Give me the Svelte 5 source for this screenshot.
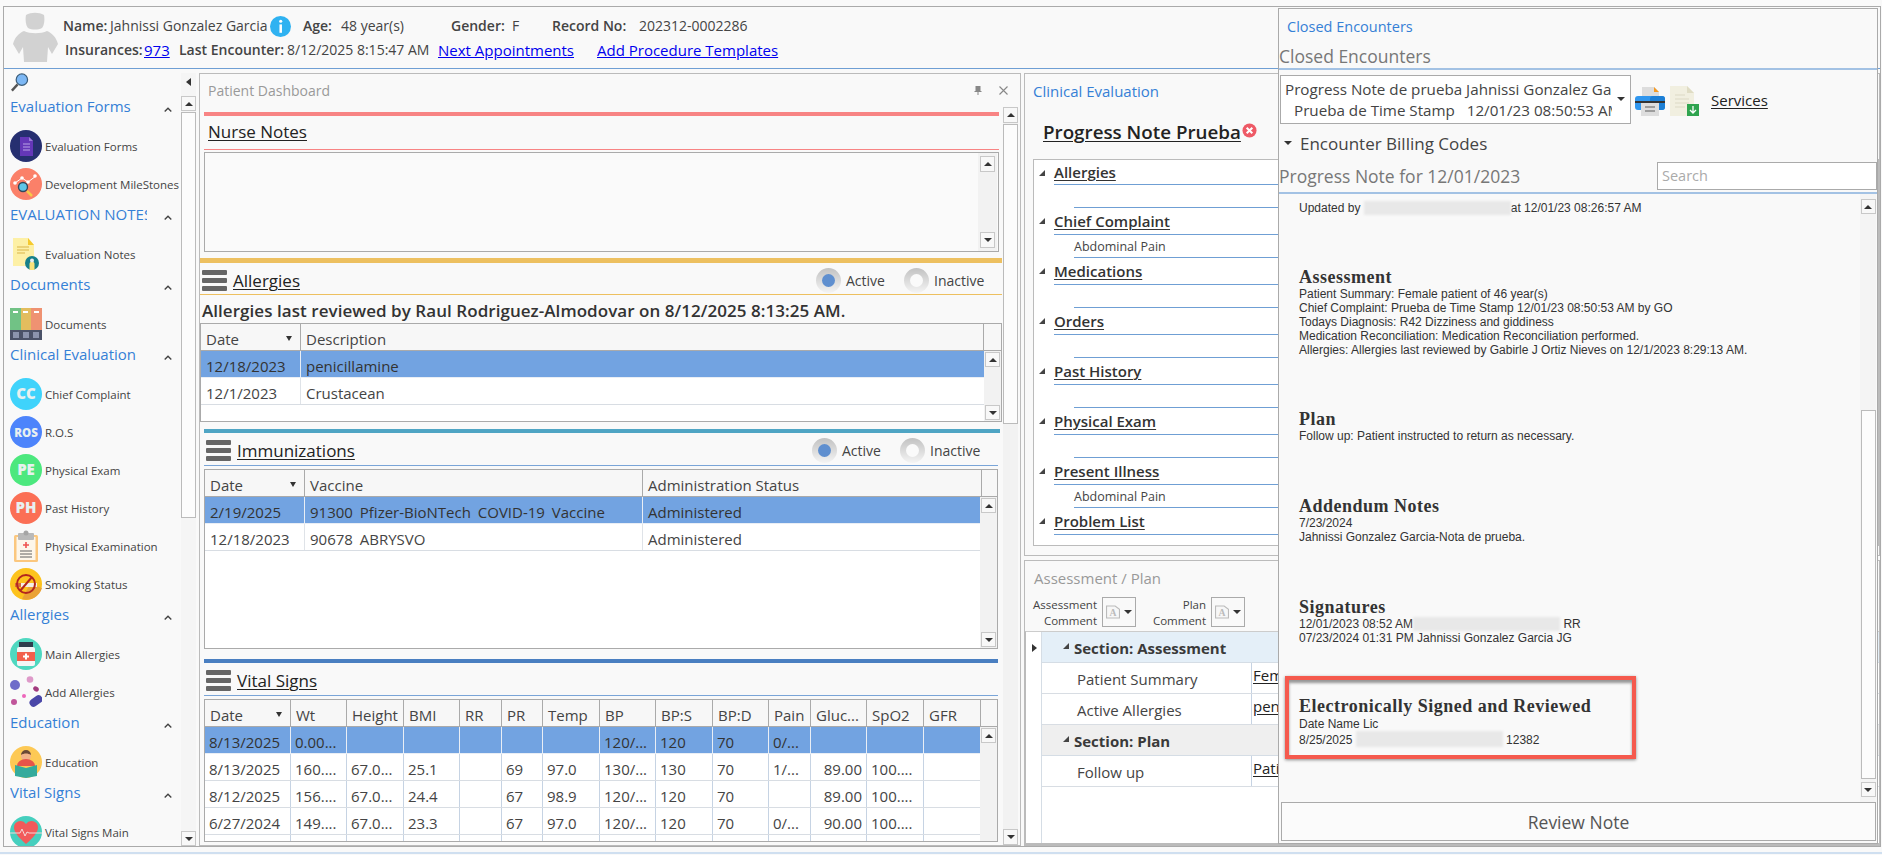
<script>
  const sidebar = [
    { title: 'Evaluation Forms', items: [['Evaluation Forms','form'],['Development MileStones','mile']] },
    { title: 'EVALUATION NOTES', items: [['Evaluation Notes','note']] },
    { title: 'Documents', items: [['Documents','docs']] },
    { title: 'Clinical Evaluation', items: [['Chief Complaint','cc'],['R.O.S','ros'],['Physical Exam','pe'],['Past History','ph'],['Physical Examination','clip'],['Smoking Status','smoke']] },
    { title: 'Allergies', items: [['Main Allergies','bottle'],['Add Allergies','pills']] },
    { title: 'Education', items: [['Education','edu']] },
    { title: 'Vital Signs', items: [['Vital Signs Main','heart']] }
  ];
  const letters = { cc: ['CC', '#3fd3fb', 15], ros: ['ROS', '#4d84fb', 11.5], pe: ['PE', '#4ce87e', 15], ph: ['PH', '#fb6f55', 15] };
  const vitalsHead = ['Date','Wt','Height','BMI','RR','PR','Temp','BP','BP:S','BP:D','Pain','Gluc...','SpO2','GFR'];
  const vitals = [
    ['8/13/2025','0.00...','','','','','','120/...','120','70','0/...','','',''],
    ['8/13/2025','160....','67.0...','25.1','','69','97.0','130/...','130','70','1/...','89.00','100....',''],
    ['8/12/2025','156....','67.0...','24.4','','67','98.9','120/...','120','70','','89.00','100....',''],
    ['6/27/2024','149....','67.0...','23.3','','67','97.0','120/...','120','70','0/...','90.00','100....',''],
    ['','','','','','','','','','','','','','']
  ];
  const tree = [
    ['Allergies',''],['Chief Complaint','Abdominal Pain'],['Medications',''],['Orders',''],
    ['Past History',''],['Physical Exam',''],['Present Illness','Abdominal Pain'],['Problem List',null]
  ];
</script>

{#snippet scrollbtn(dir)}
  <div class="sbtn"><i class={dir}></i></div>
{/snippet}

{#snippet bars()}
  <svg class="bars" viewBox="0 0 25 21"><rect width="25" height="5" rx="1"/><rect y="8" width="25" height="5" rx="1"/><rect y="16" width="25" height="5" rx="1"/></svg>
{/snippet}

{#snippet radios()}
  <div class="radios">
    <span class="radio on"><i></i></span><span class="rl">Active</span>
    <span class="radio"><i></i></span><span class="rl">Inactive</span>
  </div>
{/snippet}

{#snippet icon(k)}
  <svg class="ic" viewBox="0 0 32 32">
    {#if letters[k]}
      <circle cx="16" cy="16" r="16" fill={letters[k][1]}/>
      <text x="16" y="21" text-anchor="middle" font-family="Open Sans, sans-serif" font-weight="800" font-size={letters[k][2]} fill="#e8f0f0">{letters[k][0]}</text>
    {:else if k === 'form'}
      <circle cx="16" cy="16" r="16" fill="#262f70"/><path d="M10 7h9l4 4v15H10z" fill="#6437b8"/><path d="M19 7l4 4h-4z" fill="#9a7ad8"/><path d="M13 14h7M13 17h7M13 20h7" stroke="#b9a4e6" stroke-width="1"/>
    {:else if k === 'mile'}
      <circle cx="16" cy="16" r="16" fill="#fb8069"/><path d="M5 15l7-5 6 4 8-6" stroke="#fff" stroke-width="1" fill="none"/><circle cx="5" cy="15" r="1.800" fill="#fff"/><circle cx="12" cy="10" r="1.800" fill="#fff"/><circle cx="18" cy="14" r="1.800" fill="#fff"/><circle cx="25" cy="8" r="1.800" fill="#fff"/><path d="M17 23l5 5" stroke="#f7c948" stroke-width="2.500"/><circle cx="13" cy="19" r="4.500" fill="#5fc6e8" stroke="#33475b" stroke-width="1.400"/>
    {:else if k === 'note'}
      <path d="M3 0h15l6 7v21H3z" fill="#fdf0a6"/><path d="M18 0l6 7h-6z" fill="#f5c92e"/><path d="M7 9h12M7 12h12M7 15h8" stroke="#d9b54b" stroke-width="1"/><circle cx="22" cy="25" r="7" fill="#16808a"/><path d="M19.500 32v-6a2.500 2.500 0 015 0v6z" fill="#f8e27a"/><circle cx="22" cy="22.500" r="2" fill="#e8eef0"/>
    {:else if k === 'docs'}
      <rect x="0" width="11" height="32" fill="#71c285"/><rect x="11" width="10" height="32" fill="#e3bd5e"/><rect x="21" width="11" height="32" fill="#ef9272"/><rect x="3" y="3" width="5" height="2" fill="#fff"/><rect x="13" y="3" width="5" height="2" fill="#fff"/><rect x="24" y="3" width="5" height="2" fill="#fff"/><rect y="22" width="32" height="10" fill="#4b5268"/><rect x="3" y="24" width="6" height="6" fill="#8c94ad"/><rect x="13" y="24" width="6" height="6" fill="#8c94ad"/><rect x="23" y="24" width="6" height="6" fill="#8c94ad"/>
    {:else if k === 'clip'}
      <rect x="4" y="5" width="24" height="27" rx="1.500" fill="#fbc77e"/><rect x="6.500" y="7" width="19" height="23" fill="#fdf6ea"/><rect x="8" y="3" width="16" height="7" rx="1" fill="#b9b9b9"/><circle cx="16" cy="3" r="2.500" fill="#a5a5a5"/><path d="M16 12v6M13 15h6" stroke="#ef5350" stroke-width="1.600"/><path d="M10 21h12M10 24h12M10 27h12" stroke="#606060" stroke-width="1"/>
    {:else if k === 'smoke'}
      <circle cx="16" cy="16" r="16" fill="#fdc31d"/><path d="M20 16l12 4a16 16 0 01-20 11z" fill="#eaa235"/><rect x="5" y="15" width="22" height="4" fill="#f3efe6"/><rect x="5" y="15" width="6" height="4" fill="#d96b3b"/><circle cx="16" cy="16" r="9" fill="none" stroke="#b3261e" stroke-width="2"/><path d="M10 23L22 9" stroke="#b3261e" stroke-width="2"/>
    {:else if k === 'bottle'}
      <circle cx="16" cy="16" r="16" fill="#4fd8c0"/><rect x="9" y="4" width="14" height="5" fill="#2f3e4d"/><rect x="7" y="9" width="18" height="19" rx="2" fill="#f4f6f6"/><rect x="7" y="14" width="18" height="9" fill="#f25f4c"/><path d="M16 15.500v6M13 18.500h6" stroke="#fff" stroke-width="2"/>
    {:else if k === 'pills'}
      <circle cx="5" cy="9" r="5" fill="#6f6cc9"/><circle cx="20" cy="3.500" r="3.300" fill="#de9ac9"/><ellipse cx="26" cy="13" rx="3" ry="2.300" fill="#a23a7e" transform="rotate(35 26 13)"/><circle cx="14" cy="20" r="2" fill="#ee66bb"/><circle cx="4" cy="26" r="3" fill="#c0559a"/><rect x="19" y="21" width="14" height="8" rx="4" fill="#4a47a8" transform="rotate(-35 26 25)"/>
    {:else if k === 'edu'}
      <circle cx="16" cy="16" r="16" fill="#fdc955"/><circle cx="16" cy="10" r="5" fill="#f2b48a"/><path d="M11 9a5 5 0 0110 0c-3-2-7-2-10 0z" fill="#6b4a36"/><path d="M7 20a9 7 0 0118 0z" fill="#e8544a"/><path d="M5 19l11 3 11-3v11l-11 2-11-2z" fill="#35ab9c"/>
    {:else if k === 'heart'}
      <circle cx="16" cy="16" r="16" fill="#46cfbe"/><path d="M16 28C8 21 4 16 4 11.500A6.500 6.500 0 0116 8a6.500 6.500 0 0112 3.500C28 16 24 21 16 28z" fill="#f25a5a"/><path d="M0 17h10l2-4 3 7 2-4 2 1h13" stroke="#f4d9d9" stroke-width="1" fill="none"/>
    {/if}
  </svg>
{/snippet}

<div class="root">
  <div class="frame">
    <header class="head">
      <svg class="avatar" viewBox="0 0 45 50">
        <path d="M13 3c5-3 13-3 18 0 1 5 0 11-2 13-4 2-10 2-14 0-2-2-3-8-2-13z" fill="#d2d2d2"/>
        <path d="M11 19c6 3 17 3 23 0 5 2 9 6 11 13l-6 10-4-7-1 15H11l-1-15-4 7-6-10c2-7 6-11 11-13z" fill="#d2d2d2"/>
      </svg>
      <div class="hinfo">
        <div class="r1">
          <b>Name:</b><span>Jahnissi Gonzalez Garcia</span>
          <svg class="info" viewBox="0 0 20 20"><circle cx="10" cy="10" r="10" fill="#2fb2f1"/><rect x="9" y="8" width="2.400" height="8" fill="#fff"/><circle cx="10.200" cy="5" r="1.500" fill="#fff"/></svg>
          <b>Age:</b><span>48 year(s)</span>
          <b>Gender:</b><span>F</span>
          <b>Record No:</b><span>202312-0002286</span>
        </div>
        <div class="r2">
          <b>Insurances:</b><a href="#a">973</a>
          <b>Last Encounter:</b><span>8/12/2025 8:15:47 AM</span>
          <a href="#a">Next Appointments</a><a href="#a">Add Procedure Templates</a>
        </div>
      </div>
    </header>

    <div class="body">
      <aside class="side">
        <div class="nav">
          <svg class="mag" viewBox="0 0 20 20"><path d="M8 12L2 18.500" stroke="#555" stroke-width="2.500"/><circle cx="12.500" cy="7" r="6" fill="#7db8f5" stroke="#3b5d7a" stroke-width="1.300"/></svg>
          {#each sidebar as s}
            <div class="sh"><span class="st">{s.title}</span><svg class="chev" viewBox="0 0 8 5"><path d="M.7 4.500L4 1.200l3.300 3.300" fill="none" stroke="#444" stroke-width="1.400"/></svg></div>
            {#each s.items as it}
              <div class="si">{@render icon(it[1])}<span>{it[0]}</span></div>
            {/each}
          {/each}
        </div>
        <div class="sidebar-sb">
          <i class="collapse"></i>
          {@render scrollbtn('up')}
          <div class="thumb side-thumb"></div>
          <div class="rest"></div>
          {@render scrollbtn('down')}
        </div>
      </aside>

      <section class="dash">
        <div class="dash-title">
          <span>Patient Dashboard</span>
          <div class="dash-tools">
            <svg class="pin" viewBox="0 0 8 9"><path d="M1.500 0h5v5h1v1H4.500v3h-1V6H.5V5h1z" fill="#888"/></svg>
            <svg class="close" viewBox="0 0 9 9"><path d="M.5.500l8 8M8.500.500l-8 8" stroke="#888" stroke-width="1.100"/></svg>
          </div>
        </div>
        <div class="dash-body">
          <div class="dash-main">
            <div class="bar red"></div>
            <div class="nn-title"><u>Nurse Notes</u></div>
            <div class="nn-box">
              <div class="sb nn-sb">{@render scrollbtn('up')}<div class="rest"></div>{@render scrollbtn('down')}</div>
            </div>

            <div class="bar yellow"></div>
            <div class="sec-head al-head">{@render bars()}<u>Allergies</u>{@render radios()}</div>
            <div class="reviewed">Allergies last reviewed by Raul Rodriguez-Almodovar on 8/12/2025 8:13:25 AM.</div>
            <div class="tbl al-tbl">
              <div class="thead al-cols"><div class="sort">Date<i></i></div><div>Description</div><div></div></div>
              <div class="tbody">
                <div class="rows">
                  <div class="tr al-cols sel"><div>12/18/2023</div><div>penicillamine</div></div>
                  <div class="tr al-cols"><div>12/1/2023</div><div>Crustacean</div></div>
                </div>
                <div class="sb">{@render scrollbtn('up')}<div class="rest"></div>{@render scrollbtn('down')}</div>
              </div>
            </div>

            <div class="bar teal"></div>
            <div class="sec-head im-head">{@render bars()}<u>Immunizations</u>{@render radios()}</div>
            <div class="tbl im-tbl">
              <div class="thead im-cols"><div class="sort">Date<i></i></div><div>Vaccine</div><div>Administration Status</div><div></div></div>
              <div class="tbody">
                <div class="rows">
                  <div class="tr im-cols sel"><div>2/19/2025</div><div class="vac">91300 Pfizer-BioNTech COVID-19 Vaccine</div><div>Administered</div></div>
                  <div class="tr im-cols"><div>12/18/2023</div><div class="vac">90678 ABRYSVO</div><div>Administered</div></div>
                </div>
                <div class="sb">{@render scrollbtn('up')}<div class="rest"></div>{@render scrollbtn('down')}</div>
              </div>
            </div>

            <div class="bar blue"></div>
            <div class="sec-head vs-head">{@render bars()}<u>Vital Signs</u></div>
            <div class="tbl vs-tbl">
              <div class="thead vs-cols">
                {#each vitalsHead as h, i}<div class:sort={i === 0}>{h}{#if i === 0}<i></i>{/if}</div>{/each}<div></div>
              </div>
              <div class="tbody">
                <div class="rows">
                  {#each vitals as r, ri}
                    <div class="tr vs-cols" class:sel={ri === 0}>
                      {#each r as c, i}<div class:num={i === 11}>{c}</div>{/each}
                    </div>
                  {/each}
                </div>
                <div class="sb">{@render scrollbtn('up')}<div class="rest"></div></div>
              </div>
            </div>
          </div>
          <div class="sb dash-sb">
            {@render scrollbtn('up')}
            <div class="thumb dash-thumb"></div>
            <div class="rest"></div>
            {@render scrollbtn('down')}
          </div>
        </div>
      </section>

      <div class="mid">
        <section class="clin">
          <div class="clin-title">Clinical Evaluation</div>
          <div class="note-title"><u>Progress Note Prueba</u>
            <svg class="xicon" viewBox="0 0 16 16"><circle cx="8" cy="8" r="7.500" fill="#ee5a66"/><path d="M5 5l6 6M11 5l-6 6" stroke="#fff" stroke-width="2.200"/></svg>
          </div>
          <div class="tree">
            {#each tree as t}
              <div class="tn"><i class="tri"></i><u>{t[0]}</u></div>
              {#if t[1] !== null}<div class="ts">{t[1]}</div>{/if}
            {/each}
          </div>
        </section>
        <section class="assess">
          <div class="as-title">Assessment / Plan</div>
          <div class="as-tools">
            <div class="cl l1">Assessment<br/>Comment</div>
            <div class="cb"><svg viewBox="0 0 14 13"><path d="M1 1h8l4 3v8H1z" fill="#f7f7f7" stroke="#bbb"/><text x="7" y="10.500" text-anchor="middle" font-size="9" font-weight="700" font-family="Liberation Serif, serif" fill="#bbb">A</text></svg><i></i></div>
            <div class="cl l2">Plan<br/>Comment</div>
            <div class="cb"><svg viewBox="0 0 14 13"><path d="M1 1h8l4 3v8H1z" fill="#f7f7f7" stroke="#bbb"/><text x="7" y="10.500" text-anchor="middle" font-size="9" font-weight="700" font-family="Liberation Serif, serif" fill="#bbb">A</text></svg><i></i></div>
          </div>
          <div class="grid">
            <div class="gutter"><i></i></div>
            <div class="gmain">
              <div class="gsec a"><i class="tri"></i>Section: Assessment</div>
              <div class="grow"><span>Patient Summary</span><u>Female patient</u></div>
              <div class="grow"><span>Active Allergies</span><u>penicillamine</u></div>
              <div class="gsec p"><i class="tri"></i>Section: Plan</div>
              <div class="grow"><span>Follow up</span><u>Patient instructed</u></div>
            </div>
          </div>
        </section>
      </div>
    </div>

    <section class="closed">
      <div class="c-title">Closed Encounters</div>
      <div class="c-sub">Closed Encounters</div>
      <div class="c-combo-row">
        <div class="combo">
          <div class="combo-text"><div>Progress Note de prueba Jahnissi Gonzalez Garcia</div><div class="indent">Prueba de Time Stamp &nbsp; 12/01/23 08:50:53 AM</div></div>
          <i class="caret"></i>
        </div>
        <svg class="print" viewBox="0 0 30 30">
          <path d="M7 1h12l5 5v8H7z" fill="#ddd"/><path d="M19 1l5 5h-5z" fill="#f59a23"/>
          <rect y="10" width="30" height="14" rx="3" fill="#2f96ee"/><rect x="15" y="10" width="15" height="14" rx="3" fill="#1c7fd6"/>
          <rect y="15" width="30" height="2" fill="#333"/><rect x="6" y="17" width="18" height="13" fill="#ddd"/><path d="M10 21h10M10 25h10" stroke="#888" stroke-width="1.500"/>
        </svg>
        <svg class="dl" viewBox="0 0 29 30">
          <path d="M0 0h17l7 7v23H0z" fill="#f1efe0"/><path d="M17 0l7 7h-7z" fill="#dfdcc4"/><path d="M5 9h10M5 13h14M5 17h14M5 21h10" stroke="#dcd9c5"/>
          <rect x="17" y="18" width="12" height="12" fill="#2fa44f"/><path d="M23 20v7M20 24l3 3 3-3" stroke="#fff" stroke-width="1.300" fill="none"/>
        </svg>
        <u class="services">Services</u>
      </div>
      <div class="billing"><i class="caret"></i>Encounter Billing Codes</div>
      <div class="pn-row"><span>Progress Note for 12/01/2023</span><div class="search">Search</div></div>
      <div class="c-body">
        <div class="doc">
          <p class="updated">Updated by <span class="blur b1"></span>at 12/01/23 08:26:57 AM</p>
          <h3 class="near">Assessment</h3>
          <p>Patient Summary: Female patient of 46 year(s)<br/>Chief Complaint: Prueba de Time Stamp 12/01/23 08:50:53 AM by GO<br/>Todays Diagnosis: R42 Dizziness and giddiness<br/>Medication Reconciliation: Medication Reconciliation performed.<br/>Allergies: Allergies last reviewed by Gabirle J Ortiz Nieves on 12/1/2023 8:29:13 AM.</p>
          <h3 class="near">Plan</h3>
          <p>Follow up: Patient instructed to return as necessary.</p>
          <h3>Addendum Notes</h3>
          <p>7/23/2024<br/>Jahnissi Gonzalez Garcia-Nota de prueba.</p>
          <h3>Signatures</h3>
          <p>12/01/2023 08:52 AM<span class="blur b2"></span> RR<br/>07/23/2024 01:31 PM Jahnissi Gonzalez Garcia JG</p>
          <div class="redbox">
            <h3>Electronically Signed and Reviewed</h3>
            <p>Date Name Lic<br/>8/25/2025 <span class="blur b3"></span> 12382</p>
          </div>
        </div>
        <div class="sb doc-sb">
          {@render scrollbtn('up')}
          <div class="rest"></div>
          <div class="thumb doc-thumb"></div>
          {@render scrollbtn('down')}
        </div>
      </div>
      <div class="review">Review Note</div>
    </section>
  </div>
  <div class="footline"></div>
</div>

<style>
  :global(body) { margin: 0; background: #f9f9f9; }
  .root { width: 1882px; height: 855px; box-sizing: border-box; padding: 6px 1px 0 3px; background: #f9f9f9; overflow: hidden; font-family: "Open Sans", sans-serif; color: #444; }
  .frame { position: relative; height: 841px; box-sizing: border-box; border: 1px solid #aaa; display: flex; flex-direction: column; }
  .footline { height: 2px; margin: 5px -1px 0 -3px; background: #cfdff0; }
  u { text-underline-offset: 2px; text-decoration-thickness: 1px; }

  /* header */
  .head { height: 62px; box-sizing: border-box; border-bottom: 1px solid #6f9fd4; display: flex; flex: none; padding: 5px 0 0 9px; }
  .avatar { width: 45px; height: 50px; flex: none; }
  .hinfo { margin-left: 5px; font-size: 14px; line-height: 26px; white-space: nowrap; }
  .hinfo b { font-weight: 600; }
  .r1 { display: grid; grid-template-columns: 47px 160px 33px 38px 110px 61px 40px 87px auto; align-items: center; padding-top: 1px; }
  .r2 { display: grid; grid-template-columns: 79px 35px 108px 151px 159px auto; align-items: center; margin: -2px 0 0 2px; }
  .r2 a { color: #0000ee; font-size: 15px; }
  .r2 b { font-size: 14px; }
  .info { width: 21px; height: 21px; display: block; }

  .body { flex: 1; min-height: 0; display: flex; padding-top: 4px; }

  /* sidebar */
  .side { width: 193px; flex: none; display: flex; overflow: hidden; }
  .nav { width: 177px; flex: none; position: relative; }
  .mag { display: block; width: 19px; height: 19px; margin: 0 0 3px 6px; }
  .sh { height: 32px; display: flex; align-items: flex-start; }
  .st { width: 137px; margin-left: 6px; overflow: hidden; white-space: nowrap; font-size: 15px; line-height: 22px; color: #3580d6; }
  .chev { width: 8px; height: 5px; margin: 12px 0 0 17px; }
  .si { height: 38px; display: flex; align-items: center; padding-left: 6px; font-size: 11.500px; white-space: nowrap; }
  .si span { margin-left: 3px; }
  .ic { width: 32px; height: 32px; flex: none; }
  .sidebar-sb { width: 15px; margin-left: 0; display: flex; flex-direction: column; position: relative; background: #f5f5f5; padding-top: 23px; }
  .collapse { position: absolute; left: 5px; top: 5px; border: 4px solid transparent; border-right: 5px solid #333; border-left: 0; }
  .side-thumb { height: 404px; }

  .sb { width: 17px; flex: none; display: flex; flex-direction: column; align-items: center; background: #f2f2f2; padding: 1px 0; box-sizing: border-box; }
  .sbtn { width: 13px; height: 13px; flex: none; border: 1px solid #c8c8c8; background: #f8f8f8; display: flex; align-items: center; justify-content: center; }
  .sbtn i { display: block; border: 4px solid transparent; border-top: 0; border-bottom: 4px solid #333; }
  .sbtn i.down { border-bottom: 0; border-top: 4px solid #333; }
  .rest { flex: 1; }
  .thumb { width: 13px; flex: none; border: 1px solid #bbb; background: #fcfcfc; margin: 1px 0; }
  .sidebar-sb .thumb, .sidebar-sb .sbtn { width: 13px; }

  /* dashboard */
  .dash { width: 820px; margin-left: 2px; flex: none; border: 1px solid #bbb; display: flex; flex-direction: column; }
  .dash-title { height: 33px; flex: none; display: flex; justify-content: space-between; align-items: center; padding-left: 8px; font-size: 14px; color: #999; }
  .dash-tools { display: flex; align-items: center; gap: 17px; margin-right: 12px; }
  .pin { width: 8px; height: 9px; }
  .close { width: 9px; height: 9px; }
  .dash-body { flex: 1; min-height: 0; display: flex; }
  .dash-main { width: 803px; padding-top: 5px; flex: none; overflow: hidden; }
  .dash-sb { width: 15px; padding: 0; }
  .dash-thumb { height: 298px; }
  .dash-sb .sbtn { height: 14px; }

  .bar { height: 4px; }
  .red { margin-left: 4px; width: 795px; background: #f88484; }
  .yellow { margin-top: 6px; width: 802px; height: 5px; background: #edc060; }
  .teal { margin: 7px 0 0 4px; width: 796px; background: #4fa5c4; }
  .blue { margin: 10px 0 0 4px; width: 794px; background: #4a7fc1; }
  .nn-title { height: 34px; box-sizing: border-box; margin-left: 4px; width: 795px; padding-left: 4px; border-bottom: 1px solid #f88484; font-size: 17px; line-height: 32px; color: #222; }
  .nn-box { margin: 2px 0 0 4px; width: 795px; height: 100px; box-sizing: border-box; border: 1px solid #aaa; background: #fafafa; display: flex; justify-content: flex-end; }
  .nn-sb { width: 19px; padding: 3px 0; margin-right: 1px; }
  .nn-sb .sbtn { height: 14px; }

  .sec-head { display: flex; align-items: center; font-size: 17px; color: #222; box-sizing: border-box; }
  .sec-head u { margin-left: 6px; }
  .bars { width: 25px; height: 21px; fill: #666; flex: none; }
  .al-head { height: 32px; width: 802px; padding: 4px 0 0 2px; border-bottom: 1px solid #edc060; }
  .im-head { height: 33px; margin-left: 4px; width: 794px; padding: 3px 0 0 2px; border-bottom: 1px solid #7aa5d8; }
  .vs-head { height: 33px; margin-left: 4px; width: 794px; padding: 3px 0 0 2px; border-bottom: 1px solid #7aa5d8; }
  .radios { margin-left: auto; display: flex; align-items: center; font-size: 14px; color: #444; margin-right: 18px; }
  .radio { width: 25px; height: 25px; flex: none; border-radius: 50%; background: linear-gradient(#c2c2c2, #f4f4f4); display: flex; align-items: center; justify-content: center; }
  .radio i { width: 13px; height: 13px; border-radius: 50%; background: #fafafa; }
  .radio.on i { background: #5f8fcf; }
  .rl { width: 58px; margin-left: 5px; line-height: 20px; }
  .rl:last-child { width: 50px; }
  .reviewed { height: 28px; padding-left: 2px; font-size: 17px; font-weight: 600; letter-spacing: .05px; line-height: 31px; color: #333; white-space: nowrap; }

  .tbl { box-sizing: border-box; border: 1px solid #aaa; background: #fff; display: flex; flex-direction: column; overflow: hidden; font-size: 15px; }
  .al-tbl { width: 802px; height: 99px; }
  .im-tbl { margin: 3px 0 0 4px; width: 794px; height: 180px; }
  .vs-tbl { margin: 3px 0 0 4px; width: 794px; height: 143px; }
  .thead { height: 26px; flex: none; background: #f7f7f7; border-bottom: 1px solid #aaa; box-sizing: content-box; grid-auto-rows: 26px; }
  .thead > div { border-right: 1px solid #aaa; padding-left: 5px; line-height: 31px; white-space: nowrap; overflow: hidden; position: relative; }
  .thead > div:last-child { border-right: 0; }
  .sort i { position: absolute; right: 8px; top: 12px; border: 3.500px solid transparent; border-bottom: 0; border-top: 5px solid #333; }
  .tbody { flex: 1; min-height: 0; display: flex; }
  .rows { flex: 1; min-width: 0; }
  .tbody .sb { width: 17px; }
  .al-cols { display: grid; grid-template-columns: 100px 683px 1fr; }
  .im-cols { display: grid; grid-template-columns: 100px 338px 339px 1fr; }
  .vs-cols { display: grid; grid-template-columns: 86px 56px 57px 56px 42px 41px 57px 56px 57px 56px 42px 56px 57px 57px 1fr; }
  .tr { height: 27px; box-sizing: border-box; border-bottom: 1px solid #d8dde3; line-height: 30px; white-space: nowrap; grid-auto-rows: 26px; }
  .tr > div { padding-left: 5px; overflow: hidden; box-sizing: border-box; }
  .al-cols.tr > div { border-right: 1px solid #dfe3e8; }
  .im-cols.tr > div { border-right: 1px solid #dfe3e8; }
  .tr > .vac { word-spacing: 3px; }
  .vs-cols.tr > div { border-right: 1px solid #c6d3e3; padding-left: 4px; }
  .tr.sel { background: #72a3e1; border-bottom-color: #e9eef5; color: #333; }
  .tr.sel > div { border-right-color: #e9eef5 !important; }
  .al-cols.tr > div:last-child, .im-cols.tr > div:last-child { border-right: 0; }
  .vs-cols.tr > div.num { text-align: right; padding-right: 4px; padding-left: 0; }

  /* middle */
  .mid { margin-left: 3px; flex: 1; min-width: 0; display: flex; flex-direction: column; gap: 4px; }
  .clin { height: 483px; box-sizing: border-box; flex: none; border: 1px solid #bbb; display: flex; flex-direction: column; padding-left: 8px; }
  .clin-title { height: 34px; line-height: 34px; font-size: 15px; color: #3580d6; }
  .note-title { height: 51px; box-sizing: border-box; padding: 0 0 4px 10px; display: flex; align-items: center; font-size: 18.800px; font-weight: 600; color: #222; white-space: nowrap; }
  .xicon { width: 15px; height: 15px; margin: 0 0 2px 1px; }
  .tree { height: 387px; box-sizing: border-box; border: 1px solid #bbb; background: #fff; padding-top: 0; }
  .tn { position: relative; height: 27px; box-sizing: border-box; margin-left: 20px; border-bottom: 1px solid #6f9fd4; font-size: 15px; font-weight: 600; line-height: 27px; color: #333; white-space: nowrap; }
  .tn:first-child { height: 25px; line-height: 25px; }
  .tn .tri { position: absolute; left: -15px; top: 10px; }
  .tri { display: inline-block; width: 0; height: 0; border-style: solid; border-width: 0 0 6px 6px; border-color: transparent transparent #444 transparent; }
  .ts { height: 23px; box-sizing: border-box; margin-left: 40px; border-bottom: 1px solid #6f9fd4; font-size: 12.500px; line-height: 24px; color: #444; }

  .assess { flex: 1; min-height: 0; border: 1px solid #bbb; border-bottom: 0; display: flex; flex-direction: column; }
  .as-title { height: 35px; padding-left: 9px; font-size: 15px; line-height: 34px; color: #999; }
  .as-tools { height: 35px; display: flex; font-size: 11.500px; line-height: 16px; text-align: right; color: #444; align-items: flex-start; }
  .cl { box-sizing: border-box; padding-top: 1px; }
  .l1 { width: 72px; }
  .l2 { width: 70px; }
  .cb { width: 34px; height: 30px; box-sizing: border-box; margin: 1px 0 0 5px; border: 1px solid #aaa; display: flex; align-items: center; padding-left: 2px; gap: 3px; }
  .cb svg { width: 16px; height: 14px; }
  .cb i { border: 4px solid transparent; border-bottom: 0; border-top: 4px solid #333; }
  .grid { flex: 1; display: flex; background: #fff; border: 2px solid #b5b5b5; border-width: 1px 0 3px 1px; border-color: #ccc #bbb #bbb #bbb; }
  .gutter { width: 15px; flex: none; border-right: 1px solid #d5dde5; background: #fff; }
  .gutter i { display: block; margin: 12px 0 0 6px; width: 0; border: 4px solid transparent; border-left: 5px solid #333; border-right: 0; }
  .gmain { flex: 1; min-width: 0; }
  .gsec { height: 31px; box-sizing: border-box; border-bottom: 1px solid #d5dde5; padding: 2px 0 0 21px; font-size: 15px; font-weight: 700; color: #3a3a3a; white-space: nowrap; display: flex; align-items: center; }
  .gsec .tri { margin: -4px 5px 0 0; }
  .gsec.a { background: #e4eff8; }
  .gsec.p { background: #efefef; }
  .grow { height: 31px; box-sizing: border-box; display: flex; font-size: 15px; line-height: 33px; white-space: nowrap; border-bottom: 1px solid #d8dde3; overflow: hidden; }
  .grow span { width: 210px; height: 30px; flex: none; box-sizing: border-box; padding-left: 35px; border-right: 1px solid #c6d3e3; }
  .grow u { padding-left: 1px; color: #222; line-height: 24px; }

  /* closed encounters overlay */
  .closed { position: absolute; left: 1274px; top: 1px; width: 600px; height: 836px; box-sizing: border-box; border: 1px solid #aaa; background: #f9f9f9; display: flex; flex-direction: column; }
  .c-title { height: 33px; padding-left: 8px; font-size: 14.500px; line-height: 35px; color: #3580d6; flex: none; }
  .c-sub { height: 28px; box-sizing: border-box; border-bottom: 2px solid #a3c2e4; font-size: 17.500px; line-height: 28px; color: #777; flex: none; }
  .c-combo-row { height: 54px; box-sizing: border-box; padding: 4px 0 0 1px; display: flex; align-items: center; flex: none; }
  .combo { width: 351px; height: 49px; box-sizing: border-box; border: 1px solid #aaa; background: #fff; display: flex; align-items: center; font-size: 15.200px; line-height: 21px; color: #444; white-space: nowrap; }
  .combo-text { width: 327px; margin-left: 4px; padding-top: 2px; overflow: hidden; }
  .indent { padding-left: 9px; }
  .caret { display: inline-block; border: 4px solid transparent; border-bottom: 0; border-top: 4px solid #333; }
  .combo .caret { margin-left: 5px; }
  .print { width: 30px; height: 30px; margin: 3px 0 0 4px; }
  .dl { width: 29px; height: 30px; margin: 3px 0 0 5px; }
  .services { margin: 2px 0 0 12px; font-size: 15px; color: #222; }
  .billing { height: 38px; flex: none; display: flex; align-items: center; padding-left: 5px; font-size: 17px; color: #444; }
  .billing .caret { margin-right: 8px; }
  .pn-row { height: 32px; flex: none; box-sizing: border-box; border-bottom: 2px solid #a3c2e4; display: flex; justify-content: space-between; padding: 0 0 3px 0; font-size: 17.500px; line-height: 28px; color: #777; }
  .search { width: 220px; height: 28px; box-sizing: border-box; border: 1px solid #aaa; background: #fff; font-size: 14.500px; line-height: 26px; padding-left: 4px; color: #aaa; }
  .c-body { flex: 1; min-height: 0; display: flex; }
  .doc { flex: 1; padding: 7px 0 0 20px; font-family: "Liberation Sans", Arial, sans-serif; font-size: 12px; line-height: 14px; color: #333; white-space: nowrap; }
  .doc p { margin: 1px 0 0; }
  .doc .updated { margin: 0; }
  .doc h3 { margin: 54px 0 0; font-family: "Liberation Serif", serif; font-size: 18px; font-weight: 700; letter-spacing: .5px; line-height: 18px; color: #333; }
  .doc .near { margin-top: 53px; }
  .blur { display: inline-block; height: 14px; background: #e8e8e8; vertical-align: -3px; filter: blur(1px); }
  .b1 { width: 147px; }
  .b2 { width: 147px; }
  .b3 { width: 147px; height: 16px; }
  .redbox { margin: 31px 0 0 -14px; width: 351px; height: 83px; box-sizing: border-box; border: 4px solid #f55a4e; padding: 17px 0 0 10px; box-shadow: 0 1px 3px rgba(0,0,0,.45), inset 0 3px 3px rgba(0,0,0,.4); }
  .doc .redbox h3 { margin: 0; }
  .doc .redbox p { margin-top: 2px; }
  .doc-sb { width: 16px; margin-right: 1px; padding: 5px 0 5px 0; background: #f4f4f4; }
  .doc-sb .thumb { height: 367px; margin: 0 0 3px; }
  .doc-sb .sbtn { height: 13px; }
  .review { margin: 0 1px 2px 2px; height: 39px; flex: none; box-sizing: border-box; border: 1px solid #aaa; background: #fbfbfb; text-align: center; font-size: 17.500px; line-height: 38px; color: #555; }
</style>
